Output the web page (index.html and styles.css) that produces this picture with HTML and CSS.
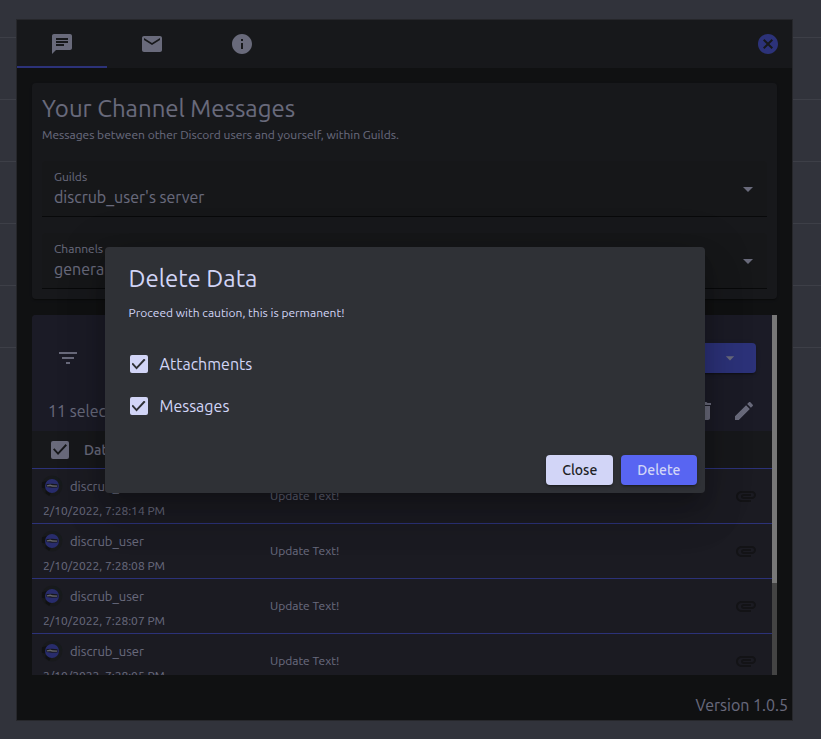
FILE: index.html
```html
<!DOCTYPE html>
<html lang="en">
<head>
<meta charset="utf-8">
<meta name="viewport" content="width=device-width, initial-scale=1">
<title>Your Channel Messages</title>
<link rel="stylesheet" href="styles.css">
</head>
<body>
<svg class="sprite" aria-hidden="true">
  <symbol id="chat" viewBox="0 0 24 24"><path d="M20 2H4c-1.100 0-1.990.9-1.990 2L2 22l4-4h14c1.100 0 2-.9 2-2V4c0-1.100-.9-2-2-2zM6 9h12v2H6V9zm8 5H6v-2h8v2zm4-6H6V6h12v2z"/></symbol>
  <symbol id="mail" viewBox="0 0 24 24"><path d="M20 4H4c-1.100 0-1.990.9-1.990 2L2 18c0 1.100.9 2 2 2h16c1.100 0 2-.9 2-2V6c0-1.100-.9-2-2-2zm0 4l-8 5-8-5V6l8 5 8-5v2z"/></symbol>
  <symbol id="info" viewBox="0 0 24 24"><path d="M12 2C6.480 2 2 6.480 2 12s4.480 10 10 10 10-4.480 10-10S17.520 2 12 2zm1 15h-2v-6h2v6zm0-8h-2V7h2v2z"/></symbol>
  <symbol id="cancel" viewBox="0 0 24 24"><path d="M12 2C6.470 2 2 6.470 2 12s4.470 10 10 10 10-4.470 10-10S17.530 2 12 2zm5 13.590L15.590 17 12 13.410 8.410 17 7 15.590 10.590 12 7 8.410 8.410 7 12 10.590 15.590 7 17 8.410 13.410 12 17 15.590z"/></symbol>
  <symbol id="filter" viewBox="0 0 24 24"><path d="M10 18h4v-2h-4v2zM3 6v2h18V6H3zm3 7h12v-2H6v2z"/></symbol>
  <symbol id="caret" viewBox="0 0 24 24"><path d="M7 10l5 5 5-5z"/></symbol>
  <symbol id="trash" viewBox="0 0 24 24"><path d="M6 19c0 1.100.9 2 2 2h8c1.100 0 2-.9 2-2V7H6v12zM19 4h-3.500l-1-1h-5l-1 1H5v2h14V4z"/></symbol>
  <symbol id="pencil" viewBox="0 0 24 24"><path d="M3 17.250V21h3.750L17.810 9.940l-3.750-3.750L3 17.250zM20.710 7.040c.39-.39.39-1.020 0-1.410l-2.340-2.340c-.39-.39-1.020-.39-1.410 0l-1.830 1.830 3.750 3.750 1.830-1.830z"/></symbol>
  <symbol id="clip" viewBox="0 0 24 24"><path d="M2 12.500C2 9.460 4.460 7 7.500 7H18c2.210 0 4 1.790 4 4s-1.790 4-4 4H9.500C8.120 15 7 13.880 7 12.500S8.120 10 9.500 10H17v2H9.410c-.55 0-.55 1 0 1H18c1.100 0 2-.9 2-2s-.9-2-2-2H7.500C5.570 9 4 10.570 4 12.500S5.570 16 7.500 16H17v2H7.500C4.460 18 2 15.540 2 12.500z"/></symbol>
  <symbol id="avatar" viewBox="0 0 24 24">
    <circle cx="12" cy="12" r="11.500" fill="#303338"/>
    <path d="M1 8l7-2 1 7-4 2-4-1zM5 16l6 3-2 4-4-3z" fill="#202225"/>
    <path d="M14 1a11 11 0 0 1 9 10l-4 1-3-6-4-3z" fill="#2d3538"/>
    <circle cx="12" cy="12" r="7.600" fill="#5058d8"/>
    <path d="M6 9.800l6-.3 6 .6v3.400l-6 .5-6-1z" fill="#2a2c3a"/>
    <path d="M6.500 11.200l3.500-.8 2.500.9 5 .2v1.200l-5 .2-2.500-.6-3.500.2z" fill="#c8c8d0"/>
  </symbol>
</svg>

<main class="panel">
  <nav class="tabs">
    <button class="tab tab-active" aria-label="Channel messages"><svg class="icon"><use href="#chat"/></svg></button>
    <button class="tab" aria-label="Direct messages"><svg class="icon"><use href="#mail"/></svg></button>
    <button class="tab" aria-label="About"><svg class="icon"><use href="#info"/></svg></button>
    <button class="exit" aria-label="Exit"><svg class="icon"><use href="#cancel"/></svg></button>
  </nav>

  <div class="content">
    <section class="card">
      <h1 class="heading">Your Channel Messages</h1>
      <p class="caption">Messages between other Discord users and yourself, within Guilds.</p>
      <div class="field">
        <label class="field-label" for="guild">Guilds</label>
        <select class="field-select" id="guild"><option>discrub_user's server</option></select>
        <svg class="icon field-caret"><use href="#caret"/></svg>
      </div>
      <div class="field">
        <label class="field-label" for="channel">Channels</label>
        <select class="field-select" id="channel"><option>general</option></select>
        <svg class="icon field-caret"><use href="#caret"/></svg>
      </div>
    </section>

    <section class="results">
      <div class="results-view">
        <div class="toolbar">
          <div class="toolbar-row">
            <button class="icon-button" aria-label="Filter"><svg class="icon"><use href="#filter"/></svg></button>
            <button class="button button-primary menu-button" aria-label="Export"><svg class="icon icon-small"><use href="#caret"/></svg></button>
          </div>
          <div class="toolbar-row toolbar-selection">
            <span>11 selected</span>
            <div class="toolbar-actions">
              <button class="icon-button" aria-label="Delete messages"><svg class="icon"><use href="#trash"/></svg></button>
              <button class="icon-button" aria-label="Edit messages"><svg class="icon"><use href="#pencil"/></svg></button>
            </div>
          </div>
        </div>
        <table class="messages">
          <thead>
            <tr>
              <th class="col-user"><div class="head-cell"><input class="check" type="checkbox" aria-label="Select all" checked><span>Date</span></div></th>
              <th></th>
              <th class="col-clip"></th>
            </tr>
          </thead>
          <tbody>
            <tr>
              <td><div class="user"><svg class="avatar"><use href="#avatar"/></svg><span>discrub_user</span></div><div class="date">2/10/2022, 7:28:14 PM</div></td>
              <td>Update Text!</td>
              <td><svg class="icon clip"><use href="#clip"/></svg></td>
            </tr>
            <tr>
              <td><div class="user"><svg class="avatar"><use href="#avatar"/></svg><span>discrub_user</span></div><div class="date">2/10/2022, 7:28:08 PM</div></td>
              <td>Update Text!</td>
              <td><svg class="icon clip"><use href="#clip"/></svg></td>
            </tr>
            <tr>
              <td><div class="user"><svg class="avatar"><use href="#avatar"/></svg><span>discrub_user</span></div><div class="date">2/10/2022, 7:28:07 PM</div></td>
              <td>Update Text!</td>
              <td><svg class="icon clip"><use href="#clip"/></svg></td>
            </tr>
            <tr>
              <td><div class="user"><svg class="avatar"><use href="#avatar"/></svg><span>discrub_user</span></div><div class="date">2/10/2022, 7:28:05 PM</div></td>
              <td>Update Text!</td>
              <td><svg class="icon clip"><use href="#clip"/></svg></td>
            </tr>
          </tbody>
        </table>
      </div>
      <div class="scroll-track"><div class="scroll-thumb"></div></div>
    </section>
  </div>

  <footer class="version">Version 1.0.5</footer>

  <div class="backdrop">
    <div class="dialog" role="dialog" aria-labelledby="dialog-title">
      <h2 class="heading" id="dialog-title">Delete Data</h2>
      <p class="caption">Proceed with caution, this is permanent!</p>
      <div class="choices">
        <label class="choice"><input class="check" type="checkbox" checked>Attachments</label>
        <label class="choice"><input class="check" type="checkbox" checked>Messages</label>
      </div>
      <div class="dialog-actions">
        <button class="button button-light">Close</button>
        <button class="button button-primary">Delete</button>
      </div>
    </div>
  </div>
</main>
</body>
</html>
```
FILE: styles.css
```css
:root {
  --text: #d2d5f7;
  --accent: #5865f2;
  --surface: #2f3136;
}

* {
  box-sizing: border-box;
}

body {
  margin: 0;
  min-height: 100vh;
  padding: 19px 28px 18px 16px;
  display: flex;
  background-color: #31333b;
  background-image: repeating-linear-gradient(to bottom, #31333b 0 37px, #3d3f47 37px 38px, #31333b 38px 62px);
  background-size: 100% 348px;
  background-repeat: no-repeat;
  color: var(--text);
  font-family: Ubuntu, "Noto Sans", sans-serif;
  font-size: 16px;
  line-height: 24px;
}

button, select {
  font: inherit;
  color: inherit;
  border: 0;
  padding: 0;
  background: none;
}

.sprite {
  position: absolute;
  width: 0;
  height: 0;
}

.icon {
  display: block;
  width: 24px;
  height: 24px;
  fill: currentColor;
}

.icon-small {
  width: 20px;
  height: 20px;
}

.panel {
  position: relative;
  flex: 1;
  min-width: 0;
  display: flex;
  flex-direction: column;
  border: 1px solid #26272b;
  background: #202225;
}

.tabs {
  display: flex;
  height: 48px;
  background: var(--surface);
}

.tab {
  width: 90px;
  display: grid;
  place-items: center;
  border-top: 2px solid transparent;
  border-bottom: 2px solid transparent;
}

.tab-active {
  border-bottom-color: var(--accent);
}

.exit {
  margin-left: auto;
  padding: 0 12px;
  color: var(--accent);
}

.content {
  flex: 1;
  display: flex;
  flex-direction: column;
  gap: 16px;
  padding: 15px 15px 0;
}

.card {
  display: flex;
  flex-direction: column;
  padding: 10px;
  border-radius: 4px;
  background: var(--surface);
  box-shadow: 0 2px 1px -1px rgba(0, 0, 0, .2), 0 1px 1px rgba(0, 0, 0, .14), 0 1px 3px rgba(0, 0, 0, .12);
}

.heading {
  margin: 0;
  font-size: 24px;
  font-weight: 400;
  line-height: 32px;
}

.caption {
  margin: 0;
  font-size: 12px;
  line-height: 20px;
}

.field {
  position: relative;
  margin-top: 16px;
  border-bottom: 1px solid #111214;
  border-radius: 4px 4px 0 0;
  background: #2d2f32;
}

.field-label {
  position: absolute;
  top: 6px;
  left: 12px;
  font-size: 12px;
  line-height: 20px;
}

.field-select {
  display: block;
  width: 100%;
  height: 55px;
  padding: 21px 32px 4px 12px;
  appearance: none;
}

.field-caret {
  position: absolute;
  top: 16px;
  right: 7px;
  pointer-events: none;
}

.results {
  display: flex;
  height: 360px;
}

.results-view {
  flex: 1;
  overflow: hidden;
  border-top-left-radius: 4px;
  background: #363645;
}

.scroll-track {
  width: 5px;
  background: #888;
}

.scroll-thumb {
  height: 74.5%;
  background: #f1f1f1;
}

.toolbar {
  padding: 24px 16px 0;
  height: 116px;
  background: #36364d;
}

.toolbar-row {
  display: flex;
  align-items: center;
  justify-content: space-between;
  height: 38px;
}

.toolbar-row > .icon-button:first-child {
  padding: 8px;
}

.toolbar-selection {
  margin-top: 15px;
}

.toolbar-actions {
  display: flex;
  gap: 16px;
}

.menu-button {
  width: 110px;
  display: flex;
  align-items: center;
  justify-content: flex-end;
}

.messages {
  width: 100%;
  border-spacing: 0;
  table-layout: fixed;
  font-size: 12px;
  line-height: 20px;
}

.messages th {
  height: 38px;
  padding: 0;
  background: var(--surface);
  border-bottom: 1px solid var(--accent);
  font-size: 14px;
  font-weight: 500;
  text-align: left;
}

.messages td {
  height: 55px;
  padding: 0 0 0 11px;
  border-bottom: 1px solid var(--accent);
}

.col-user {
  width: 227px;
}

.col-clip {
  width: 49px;
}

.head-cell {
  display: flex;
  align-items: center;
  gap: 15px;
  padding-left: 19px;
}

.user {
  display: flex;
  align-items: center;
  gap: 7px;
  height: 30px;
  margin-left: -2px;
  font-size: 13px;
}

.avatar {
  width: 22px;
  height: 22px;
}

.clip {
  color: #26262c;
}

.check {
  appearance: none;
  display: grid;
  place-items: center;
  width: 18px;
  height: 18px;
  margin: 0;
  border-radius: 2px;
  background: var(--text);
}

.check:checked::before {
  content: "";
  width: 14px;
  height: 11px;
  background: var(--surface);
  clip-path: polygon(0 51%, 10% 38%, 36% 74%, 90% 0, 100% 13%, 36% 100%);
}

.version {
  padding: 17px 4px 3px;
  text-align: right;
}

.backdrop {
  position: absolute;
  inset: 0;
  display: grid;
  place-items: center;
  background: rgba(0, 0, 0, .5);
}

.dialog {
  width: calc(100% - 64px);
  max-width: 600px;
  padding: 16px 24px 8px;
  border-radius: 4px;
  background: var(--surface);
  box-shadow: 0 11px 15px -7px rgba(0, 0, 0, .2), 0 24px 38px 3px rgba(0, 0, 0, .14), 0 9px 46px 8px rgba(0, 0, 0, .12);
}

.dialog .caption {
  margin-top: 8px;
}

.choices {
  padding: 20px 1px 28px;
}

.choice {
  display: flex;
  align-items: center;
  gap: 12px;
  height: 42px;
}

.dialog-actions {
  display: flex;
  justify-content: flex-end;
  gap: 8px;
  margin-right: -16px;
}

.button {
  height: 30px;
  padding: 0 16px;
  border-radius: 4px;
  font-size: 14px;
  font-weight: 500;
  box-shadow: 0 3px 1px -2px rgba(0, 0, 0, .2), 0 2px 2px rgba(0, 0, 0, .14), 0 1px 5px rgba(0, 0, 0, .12);
}

.button-primary {
  background: var(--accent);
}

.button-light {
  background: var(--text);
  color: #202225;
}
```
